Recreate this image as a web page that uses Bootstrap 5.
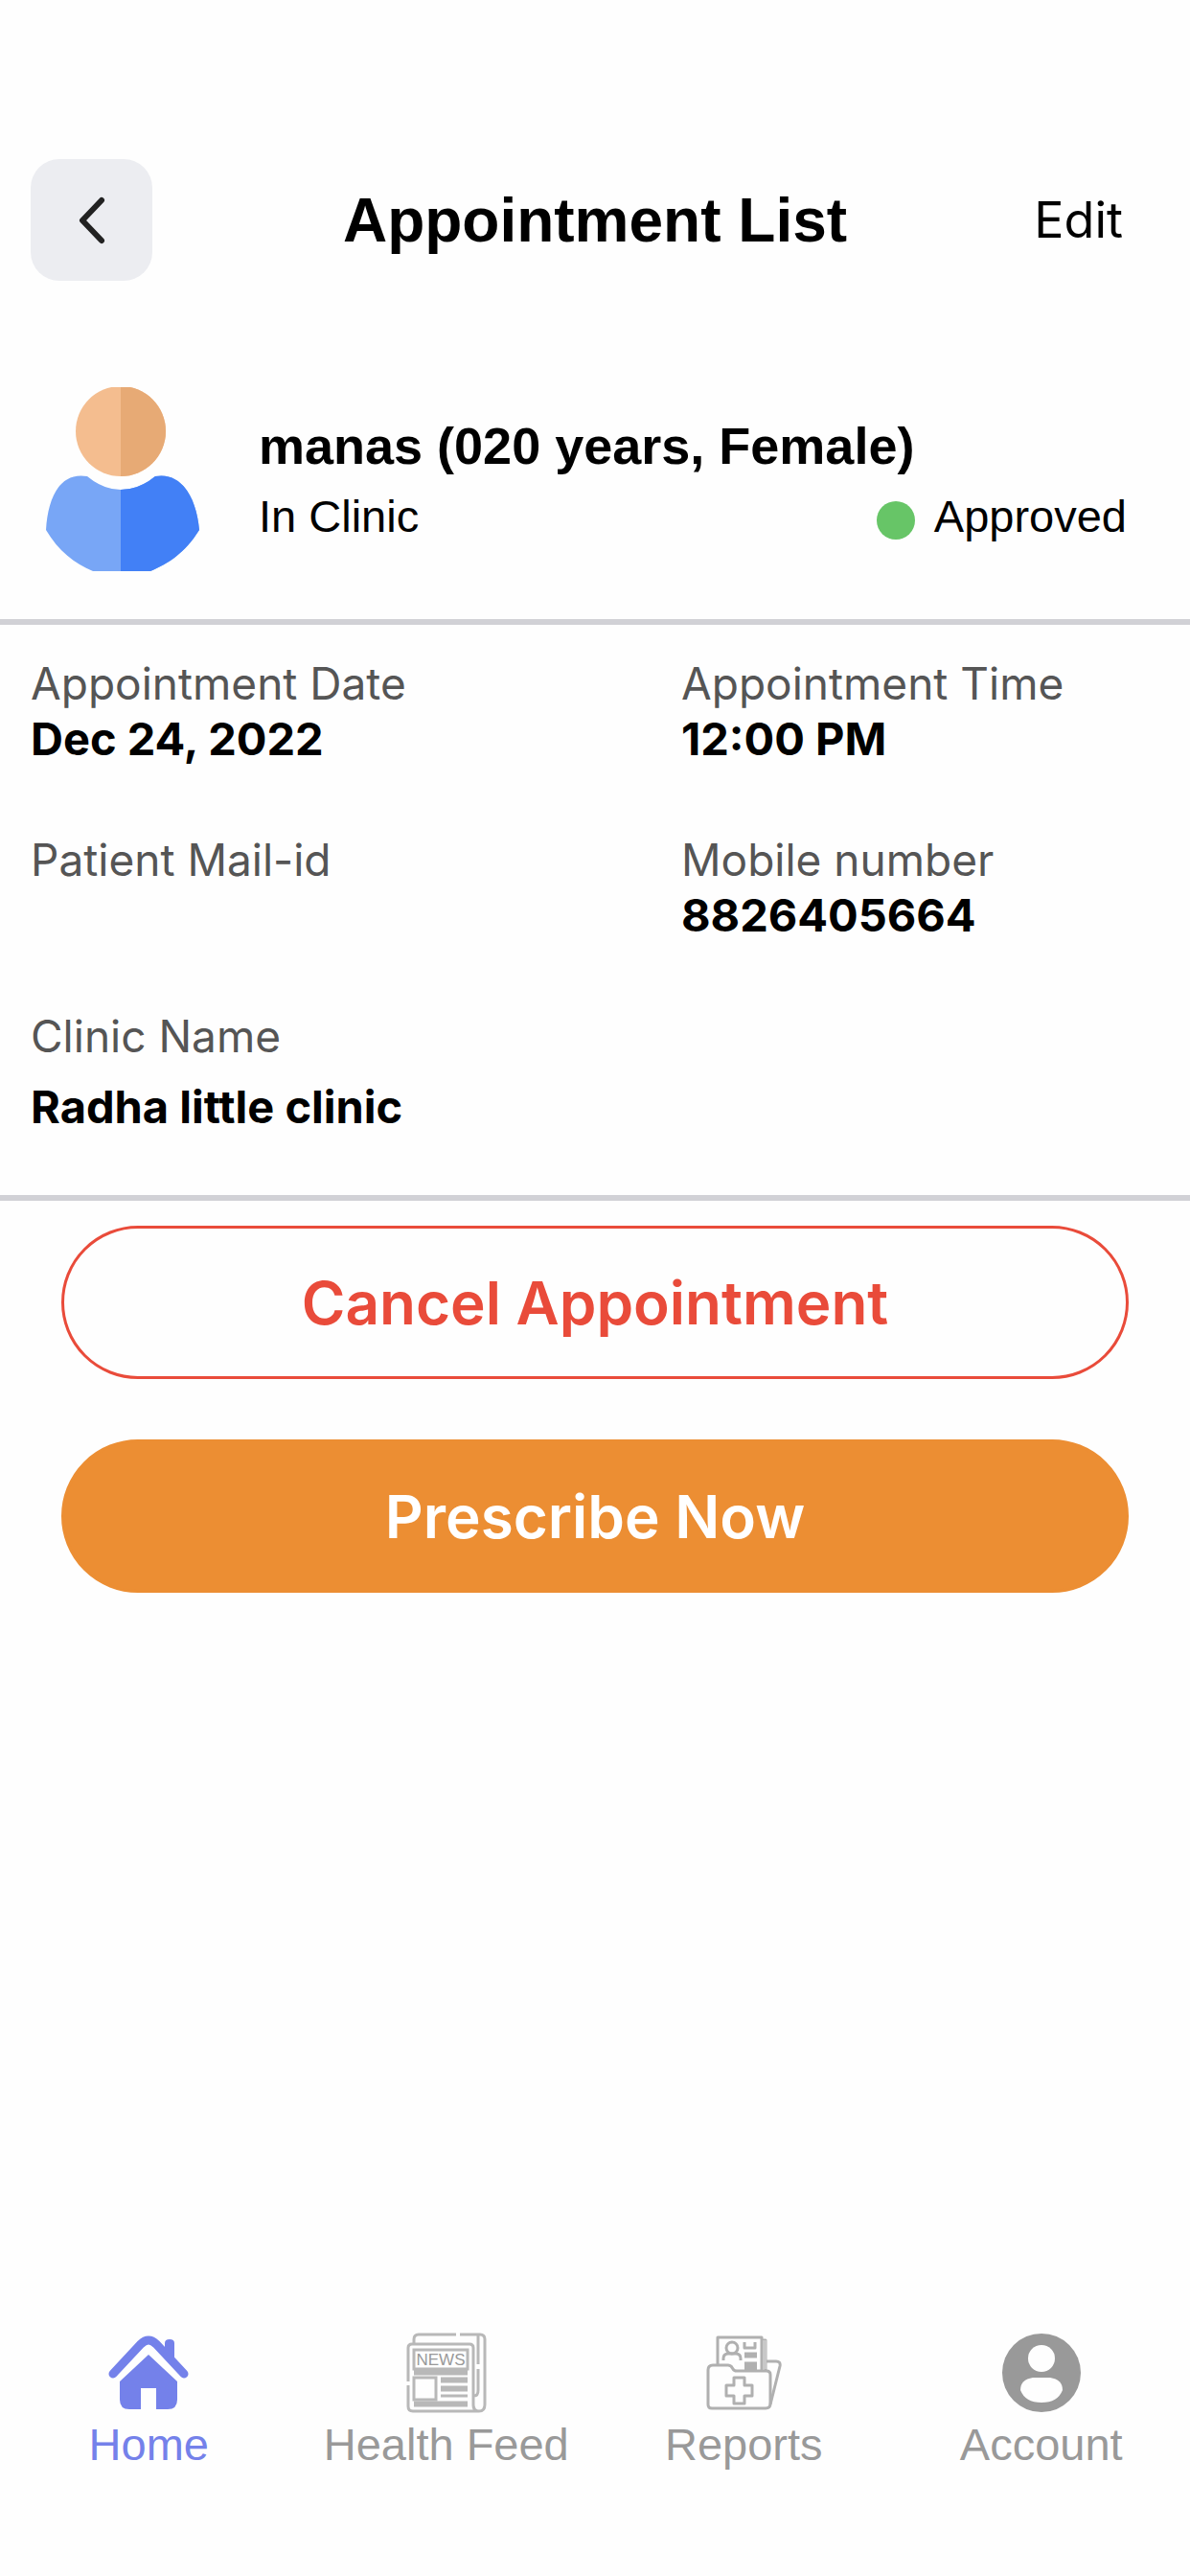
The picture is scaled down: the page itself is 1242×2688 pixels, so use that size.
<!DOCTYPE html>
<html lang="en">
<head>
<meta charset="utf-8">
<meta name="viewport" content="width=device-width, initial-scale=1">
<title>Appointment List</title>
<link href="https://cdn.jsdelivr.net/npm/bootstrap@5.3.0/dist/css/bootstrap.min.css" rel="stylesheet">
<style>
  body { background: #fefefe; color: #000; font-family: "Liberation Sans", Arial, sans-serif; }
  .ui-font { font-family: Inter, "Liberation Sans", sans-serif; }

  .top-bar { display: grid; grid-template-columns: 1fr auto 1fr; padding: 166px 32px 0; }
  .back-btn { width: 127px; height: 127px; border-radius: 30px; background: #ecedf1; }
  .page-title { font-size: 64px; line-height: 76px; }
  .edit-btn { font-size: 52px; line-height: 64px; padding: 0 38px; color: #000; }

  .profile { gap: 62px; padding: 111px 66px 50px 48px; border-bottom: 6px solid #d1d1d6; }
  .avatar { width: 160px; height: 192px; }
  .patient-name { font-size: 54px; line-height: 64px; margin-bottom: 14px; }
  .meta { font-size: 47px; line-height: 56px; }
  .status { gap: 20px; }
  .status-dot { width: 40px; height: 40px; background: #67c567; margin-top: 7px; }

  .details { display: grid; grid-template-columns: 679px 1fr; row-gap: 68px;
             padding: 32px 32px 63px; border-bottom: 6px solid #d1d1d6; font-size: 46px; line-height: 58px; }
  .details dt { font-weight: 400; color: #555; }
  .details dd { font-size: 47px; font-weight: 700; min-height: 58px; }
  .details .spaced { margin-top: 16px; }

  .actions { gap: 63px; padding: 26px 64px 0; }
  .act-btn { height: 160px; border-width: 3px; font-size: 62px; font-weight: 600; }
  .act-cancel { --bs-btn-color: #e94b3a; --bs-btn-border-color: #e94b3a; --bs-btn-bg: #fefefe; }
  .act-main { --bs-btn-color: #fff; --bs-btn-border-color: #ec8e33; --bs-btn-bg: #ec8e33; }

  .tab-bar { padding-bottom: 109px; }
  .tab-bar .nav-link { color: #999; padding: 0; gap: 5px; font-size: 47px; line-height: 56px; }
  .tab-bar .nav-link.active { color: #7481ea; }
  .tab-bar svg { width: 84px; height: 84px; }
</style>
</head>
<body class="min-vh-100 d-flex flex-column">

<header class="top-bar align-items-center">
  <button type="button" class="btn border-0 p-0 back-btn d-flex align-items-center justify-content-center" aria-label="Back">
    <svg width="30" height="52" viewBox="0 0 30 52" fill="none" stroke="#222" stroke-width="6" stroke-linecap="round" stroke-linejoin="round"><path d="M25 5 5 26l20 21"/></svg>
  </button>
  <h1 class="page-title fw-bold m-0">Appointment List</h1>
  <button type="button" class="btn border-0 edit-btn ui-font ms-auto">Edit</button>
</header>

<main>
  <section class="profile d-flex align-items-center">
    <svg class="avatar flex-shrink-0" viewBox="0 0 160 192" aria-hidden="true">
      <defs>
        <clipPath id="rightHalf"><rect x="78" y="0" width="82" height="192"/></clipPath>
        <path id="torso" d="M43 93Q60 107 78 107Q97 107 114 93C142 88 157 116 160 149C145 173 128 184 109 192H49C30 184 13 171 0 149C2 116 14 88 43 93Z"/>
      </defs>
      <circle cx="78" cy="46" r="47" fill="#f4bd8f"/>
      <circle cx="78" cy="46" r="47" fill="#e7aa75" clip-path="url(#rightHalf)"/>
      <use href="#torso" fill="#78a6f6"/>
      <use href="#torso" fill="#4280f6" clip-path="url(#rightHalf)"/>
    </svg>
    <div class="flex-grow-1">
      <h2 class="patient-name fw-bold">manas (020 years, Female)</h2>
      <div class="meta d-flex justify-content-between">
        <span>In Clinic</span>
        <span class="status d-flex align-items-center"><span class="status-dot rounded-circle"></span>Approved</span>
      </div>
    </div>
  </section>

  <dl class="details ui-font mb-0">
    <div><dt>Appointment Date</dt><dd class="m-0">Dec 24, 2022</dd></div>
    <div><dt>Appointment Time</dt><dd class="m-0">12:00 PM</dd></div>
    <div><dt>Patient Mail-id</dt><dd class="m-0"></dd></div>
    <div><dt>Mobile number</dt><dd class="m-0">8826405664</dd></div>
    <div><dt>Clinic Name</dt><dd class="mb-0 spaced">Radha little clinic</dd></div>
  </dl>

  <div class="actions d-flex flex-column ui-font">
    <button type="button" class="btn rounded-pill act-btn act-cancel">Cancel Appointment</button>
    <button type="button" class="btn rounded-pill act-btn act-main">Prescribe Now</button>
  </div>
</main>

<nav class="tab-bar nav nav-fill mt-auto">
  <a href="#" class="nav-link active d-flex flex-column align-items-center w-25" aria-current="page">
    <svg viewBox="0 0 84 84" fill="currentColor" aria-hidden="true">
      <path d="M5 43 34 12q8-8 16 0L79 43" fill="none" stroke="currentColor" stroke-width="9" stroke-linecap="round"/>
      <path d="M59 26V11q0-4 5-4t5 4v24Z"/>
      <path d="M42 23 72 51V70q0 10-10 10H50V58H34V80H22q-10 0-10-10V51Z"/>
    </svg>Home</a>
  <a href="#" class="nav-link d-flex flex-column align-items-center w-25">
    <svg viewBox="0 0 84 84" fill="none" stroke="#b8b8b8" stroke-width="3" aria-hidden="true">
      <path d="M2 51V16q0-4 4-4h60q4 0 4 4v60q0 6 6 6H7q-5 0-5-5V55M8 11V7q0-5 5-5h39M56 2h21q5 0 5 5v68q0 7-6 7t-6-7M75 3V33M75 38V60q0 6-4 6"/>
      <rect x="8" y="18" width="56" height="20"/>
      <path d="M8 40H64M8 43H64M36 48H64M36 51H64M36 57H64M36 60H64M36 66H64M8 73H64M8 76H64"/>
      <rect x="8" y="47" width="23" height="23"/>
      <text x="36" y="34" text-anchor="middle" font-family="Liberation Sans" font-size="17" fill="#999" stroke="none">NEWS</text>
    </svg>Health Feed</a>
  <a href="#" class="nav-link d-flex flex-column align-items-center w-25">
    <svg viewBox="0 0 84 84" fill="none" stroke="#b0b0b0" stroke-width="3" stroke-linejoin="round" aria-hidden="true">
      <path d="M15 33V5H61V40M61 8h4V40M65 30H76q5 0 4 5L70 75"/>
      <path d="M64 8V38" stroke="#c8c8c8" stroke-width="4"/>
      <circle cx="30" cy="16" r="6"/>
      <path d="M21 29v-2q0-5 5-5h8q5 0 5 5v2M43 10v6h11v-6M43 22H56M43 25H56M43 32H56M43 35H56M43 38H56"/>
      <path d="M5 39q0-5 5-5H26q3 0 5 4 1 2 4 2H66q4 0 4 4V74q0 5-5 5H9q-4 0-4-4Z"/>
      <path d="M32 47h11v8h8v11h-8v8H32v-8h-8V55h8Z"/>
    </svg>Reports</a>
  <a href="#" class="nav-link d-flex flex-column align-items-center w-25">
    <svg viewBox="0 0 84 84" aria-hidden="true">
      <circle cx="42" cy="42" r="41" fill="#999"/>
      <circle cx="42" cy="27" r="14" fill="#fefefe"/>
      <path d="M33 47H51Q64 49 64 60 59 73 42 73T20 60Q20 49 33 47Z" fill="#fefefe"/>
    </svg>Account</a>
</nav>

<script src="https://cdn.jsdelivr.net/npm/bootstrap@5.3.0/dist/js/bootstrap.bundle.min.js"></script>
</body>
</html>
